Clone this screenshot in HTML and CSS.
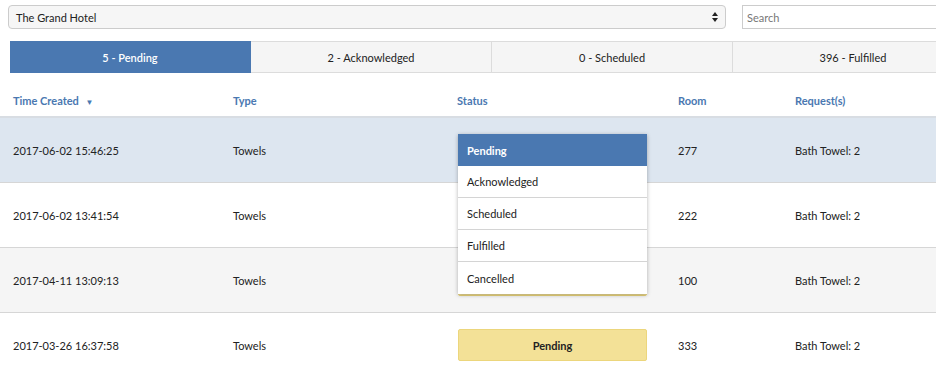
FILE: index.html
```html
<!DOCTYPE html>
<html lang="en">
<head>
    <meta charset="UTF-8">
    <meta name="viewport" content="width=device-width, initial-scale=1.0">
    <title>Requests</title>
    <link rel="stylesheet" href="styles.css">
</head>
<body>
    <div class="toolbar">
        <div class="hotel-select">
            <span>The Grand Hotel</span>
            <svg class="select-arrows" width="6" height="10" viewBox="0 0 6 10">
                <path d="M3 0 L6 4 L0 4 Z M0 6 L6 6 L3 10 Z" fill="#222"/>
            </svg>
        </div>
        <div class="search">Search</div>
    </div>

    <div class="tabs">
        <div class="tab active">5 - Pending</div>
        <div class="tab">2 - Acknowledged</div>
        <div class="tab">0 - Scheduled</div>
        <div class="tab">396 - Fulfilled</div>
    </div>

    <div class="table">
        <div class="row head">
            <div class="cell">Time Created <span class="sort">&#9660;</span></div>
            <div class="cell">Type</div>
            <div class="cell">Status</div>
            <div class="cell">Room</div>
            <div class="cell">Request(s)</div>
        </div>
        <div class="row selected">
            <div class="cell">2017-06-02 15:46:25</div>
            <div class="cell">Towels</div>
            <div class="cell status-cell">
                <div class="badge">Pending</div>
                <ul class="menu">
                    <li class="current">Pending</li>
                    <li>Acknowledged</li>
                    <li>Scheduled</li>
                    <li>Fulfilled</li>
                    <li>Cancelled</li>
                </ul>
            </div>
            <div class="cell">277</div>
            <div class="cell">Bath Towel: 2</div>
        </div>
        <div class="row">
            <div class="cell">2017-06-02 13:41:54</div>
            <div class="cell">Towels</div>
            <div class="cell status-cell"><div class="badge">Pending</div></div>
            <div class="cell">222</div>
            <div class="cell">Bath Towel: 2</div>
        </div>
        <div class="row alt">
            <div class="cell">2017-04-11 13:09:13</div>
            <div class="cell">Towels</div>
            <div class="cell status-cell"><div class="badge">Pending</div></div>
            <div class="cell">100</div>
            <div class="cell">Bath Towel: 2</div>
        </div>
        <div class="row">
            <div class="cell">2017-03-26 16:37:58</div>
            <div class="cell">Towels</div>
            <div class="cell status-cell"><div class="badge">Pending</div></div>
            <div class="cell">333</div>
            <div class="cell">Bath Towel: 2</div>
        </div>
    </div>
</body>
</html>
```

FILE: styles.css
```css
body {
    margin: 0;
    font-family: 'Lato', 'Noto Sans', sans-serif;
    font-size: 11px;
    color: #222;
    background: #fff;
    overflow: hidden;
}
.toolbar {
    display: flex;
    gap: 16px;
    padding: 5px 0 0 8px;
    height: 24px;
}
.hotel-select {
    flex: 0 0 718px;
    box-sizing: border-box;
    height: 24px;
    border: 1px solid #ccc;
    border-radius: 4px;
    background: #f6f6f6;
    display: flex;
    align-items: center;
    justify-content: space-between;
    padding: 0 7px 0 7px;
}
.search {
    flex: 1 0 auto;
    margin-right: -20px;
    box-sizing: border-box;
    height: 24px;
    border: 1px solid #ccc;
    padding: 0 4px;
    display: flex;
    align-items: center;
    color: #777;
}
.tabs {
    display: flex;
    margin: 12px 0 0 10px;
}
.tab {
    flex: 0 0 241px;
    box-sizing: border-box;
    height: 32px;
    display: flex;
    align-items: center;
    justify-content: center;
    background: #f5f5f5;
    border: 1px solid #dcdcdc;
    border-left: none;
}
.tab.active {
    background: #4a78b1;
    border-color: #4a78b1;
    color: #fff;
    font-weight: 600;
}
.table {
    margin-top: 17px;
}
.row {
    display: grid;
    grid-template-columns: 220px 224px 221px 117px 1fr;
    padding-left: 10px;
    height: 65px;
    align-items: center;
    border-bottom: 1px solid #d6d6d6;
    box-sizing: border-box;
}
.row.head {
    height: 28px;
    padding-top: 4px;
    align-items: start;
    border-bottom: 2px solid #d8dde3;
}
.row.head .cell {
    color: #4a78b1;
    font-weight: 700;
}
.sort {
    font-size: 8px;
    margin-left: 4px;
}
.row.selected {
    background: #dde6f0;
}
.row.alt {
    background: #f5f5f5;
}
.cell {
    padding: 0 3px;
}
.status-cell {
    position: relative;
    padding-left: 4px;
}
.badge {
    width: 189px;
    box-sizing: border-box;
    height: 32px;
    background: #f3e197;
    border: 1px solid #ecd67c;
    border-radius: 2px;
    display: flex;
    align-items: center;
    justify-content: center;
    font-weight: 700;
}
.menu {
    position: absolute;
    top: 0;
    left: 4px;
    width: 189px;
    margin: 0;
    padding: 0;
    list-style: none;
    background: #fff;
    box-shadow: 0 1px 4px rgba(0, 0, 0, 0.3);
    z-index: 2;
}
.menu li {
    height: 32px;
    box-sizing: border-box;
    display: flex;
    align-items: center;
    padding-left: 9px;
    border-bottom: 1px solid #d4d4d4;
}
.menu li:last-child {
    border-bottom: none;
}
.menu li.current {
    background: #4a78b1;
    color: #fff;
    font-weight: 700;
    border-bottom: none;
}
```
